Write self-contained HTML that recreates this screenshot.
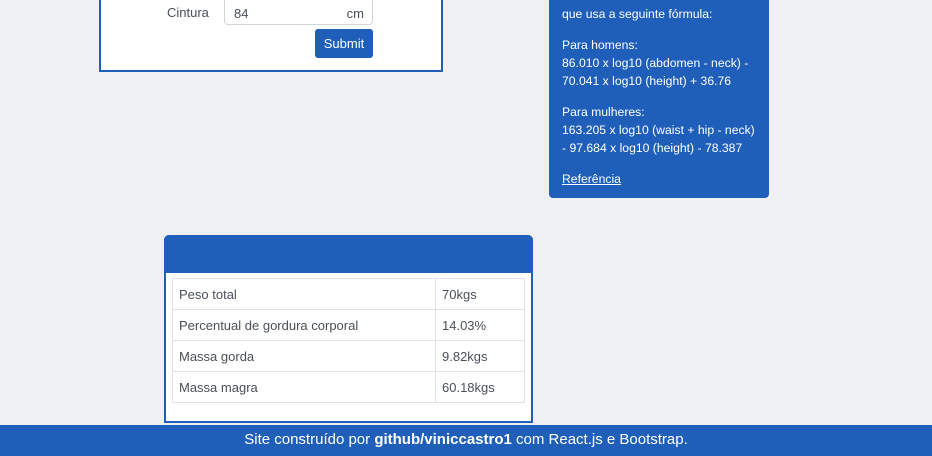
<!DOCTYPE html>
<html><head><meta charset="utf-8"><style>
*{box-sizing:border-box;margin:0;padding:0}
body{width:932px;height:456px;background:#eff0f4;font-family:"Liberation Sans",sans-serif;position:relative;overflow:hidden;color:#495057}
.c1{position:absolute;left:99px;top:-10px;width:344px;height:82px;background:#fff;border:2px solid #1f5fb9;border-top:none}
.lbl{position:absolute;left:167px;top:5px;font-size:13px;color:#495057}
.inp{position:absolute;left:224px;top:-4px;width:149px;height:29px;border:1px solid #ced4da;border-radius:4px;background:#fff;font-size:13px;padding:9px 8px 0 9px;display:flex;justify-content:space-between}
.btn{position:absolute;left:315px;top:29px;width:58px;height:29px;background:#1f5fb9;border-radius:3px;color:#fff;font-size:13px;text-align:center;line-height:29px}
.c2{position:absolute;left:549px;top:-10px;width:220px;height:208px;background:#1f5fb9;border-radius:0 0 4px 4px;color:#fff;font-size:12.2px;line-height:18px;padding:0 13px}
.c2 p{position:absolute;left:13px;white-space:nowrap}
.c3{position:absolute;left:164px;top:235px;width:369px;height:188px;background:#fff;border:2px solid #1f5fb9;border-radius:5px 5px 0 0}
.hd{position:absolute;left:-2px;top:-2px;width:369px;height:38px;background:#1f5fb9;border-radius:5px 5px 0 0}
table{position:absolute;left:6px;top:41px;width:353px;border-collapse:collapse;font-size:13px;color:#495057}
td{border:1px solid #dee2e6;height:31px;padding:0 6px}
td:last-child{width:89px}
.ft{position:absolute;left:0;top:425px;width:932px;height:31px;background:#1f5fb9;color:#fff;font-size:15px;text-align:center;line-height:29px}
</style></head><body>
<div class="c1"></div>
<div class="lbl">Cintura</div>
<div class="inp"><span>84</span><span>cm</span></div>
<div class="btn">Submit</div>
<div class="c2">
<p style="top:15px">que usa a seguinte fórmula:</p>
<p style="top:46px">Para homens:<br>86.010 x log10 (abdomen - neck) -<br>70.041 x log10 (height) + 36.76</p>
<p style="top:113px">Para mulheres:<br>163.205 x log10 (waist + hip - neck)<br>- 97.684 x log10 (height) - 78.387</p>
<p style="top:180px;text-decoration:underline">Referência</p>
</div>
<div class="c3"><div class="hd"></div>
<table>
<tr><td>Peso total</td><td>70kgs</td></tr>
<tr><td>Percentual de gordura corporal</td><td>14.03%</td></tr>
<tr><td>Massa gorda</td><td>9.82kgs</td></tr>
<tr><td>Massa magra</td><td>60.18kgs</td></tr>
</table></div>
<div class="ft">Site construído por <b>github/viniccastro1</b> com React.js e Bootstrap.</div>
</body></html>
